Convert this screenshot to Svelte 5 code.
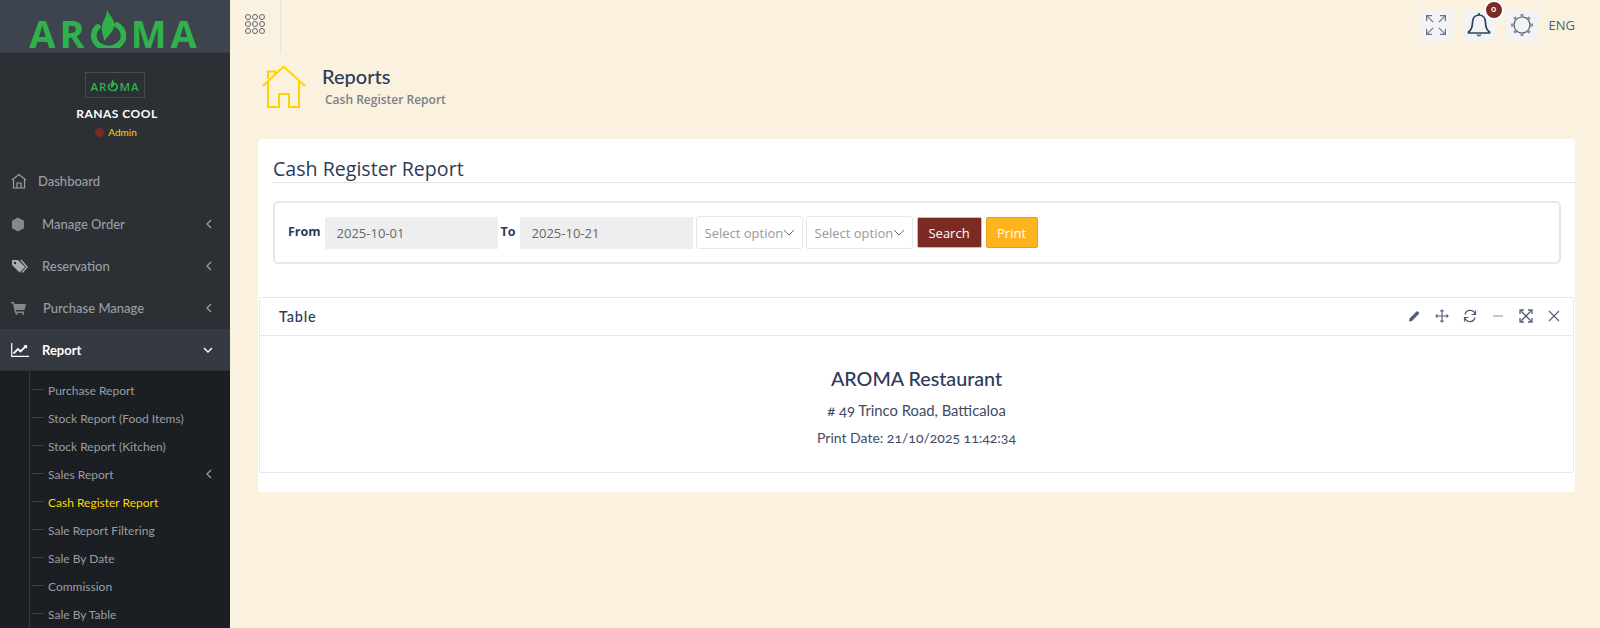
<script>
  const menu = [
    { label: "Manage Order", icon: "box" },
    { label: "Reservation", icon: "tag" },
    { label: "Purchase Manage", icon: "cart" }
  ];
  const reports = [
    { label: "Purchase Report" },
    { label: "Stock Report (Food Items)" },
    { label: "Stock Report (Kitchen)" },
    { label: "Sales Report", more: true },
    { label: "Cash Register Report", active: true },
    { label: "Sale Report Filtering" },
    { label: "Sale By Date" },
    { label: "Commission" },
    { label: "Sale By Table" }
  ];
  const dots = [0, 1, 2, 3, 4, 5, 6, 7, 8];
  const gearPins = [0, 45, 90, 135, 180, 225, 270, 315];
</script>

{#snippet chevronLeft()}
  <svg class="chev" width="8" height="10" viewBox="0 0 8 10"><path d="M6 1 2 5l4 4" fill="none" stroke="currentColor" stroke-width="1.3" /></svg>
{/snippet}

{#snippet flameO(w)}
  <svg class="flame" width={w} height={w * 1.08} viewBox="0 0 36 39">
    <path d="M8.500 17.500A14.500 12.500 0 1 0 27 15.500" fill="none" stroke="currentColor" stroke-width="5.500" stroke-linecap="round" />
    <path d="M17.500 0c.5 5 7 8 7 15 0 7-5 10-9.500 16-.5-5-3.500-8-2.500-14 1-6 5-9 5-17z" fill="currentColor" />
  </svg>
{/snippet}

<div class="shell">
  <aside class="sidebar">
    <div class="brand">
      <span class="logo">AR{@render flameO(37)}MA</span>
    </div>
    <div class="user">
      <div class="user-logo"><span class="logo small">AR{@render flameO(11)}MA</span></div>
      <div class="user-name">RANAS COOL</div>
      <div class="user-role"><i class="dot"></i>Admin</div>
    </div>
    <nav class="menu">
      <a class="item dash">
        <svg class="ico" width="16" height="16" viewBox="0 0 16 16" fill="none" stroke="#9a9ea3" stroke-width="1.2"><path d="M1 7 8 1.500 15 7" /><path d="M2.500 6.500V15h11V6.500" /><path d="M6 15v-5h4v5" /></svg>
        <span>Dashboard</span>
      </a>
      {#each menu as m}
        <a class="item">
          {#if m.icon === "box"}
            <svg class="ico" width="14" height="15" viewBox="0 0 14 15"><path d="M7 .5 13 3.800v7.400L7 14.500 1 11.200V3.800z" fill="#85888c" /></svg>
          {:else if m.icon === "tag"}
            <svg class="ico" width="17" height="15" viewBox="0 0 17 15"><path d="M1 1h6l7 7-5.500 5.500L1 6z" fill="#a9acb0" /><path d="M10 1l6 7-5 5.500" fill="none" stroke="#a9acb0" stroke-width="1.400" /><circle cx="4" cy="4" r="1.200" fill="#2c3035" /></svg>
          {:else}
            <svg class="ico" width="15" height="14" viewBox="0 0 15 14"><path d="M0 1h3l.6 2H15l-1.500 6H5l.3 1.500H13V12H4L2 2.500H0z" fill="#85888c" /><circle cx="5.500" cy="13" r="1" fill="#85888c" /><circle cx="12" cy="13" r="1" fill="#85888c" /></svg>
          {/if}
          <span class="wide">{m.label}</span>
          {@render chevronLeft()}
        </a>
      {/each}
      <a class="item open">
        <svg class="ico" width="18" height="14" viewBox="0 0 18 14" fill="none" stroke="#fff"><path d="M.7 0v13.300H18" stroke-width="1.200" /><path d="M2.500 10.500 7 6l2.500 2.500L15 3" stroke-width="1.800" /><path d="M12.500 2.200h3.600v3.600" fill="#fff" stroke="none" /></svg>
        <span class="wide">Report</span>
        <svg class="chev" width="10" height="8" viewBox="0 0 10 8"><path d="M1 2l4 4 4-4" fill="none" stroke="currentColor" stroke-width="1.400" /></svg>
      </a>
      <ul class="sub">
        {#each reports as r}
          <li class:active={r.active}>
            <span>{r.label}</span>
            {#if r.more}{@render chevronLeft()}{/if}
          </li>
        {/each}
      </ul>
    </nav>
  </aside>

  <main class="main">
    <header class="topbar">
      <div class="apps">
        <div class="apps-grid">
          {#each dots as d}<i></i>{/each}
        </div>
      </div>
      <div class="top-actions">
        <span class="tbtn">
          <svg width="20" height="20" viewBox="0 0 20 20" fill="none" stroke="#6a768c" stroke-width="1.200"><path d="M.6 6V.6H6M.6 .6l6.500 6.500" /><path d="M19.400 6V.6H14M19.400 .6l-6.500 6.500" /><path d="M.6 14v5.400H6M.6 19.400l6.500-6.500" /><path d="M19.400 14v5.400H14M19.400 19.400l-6.500-6.500" /></svg>
        </span>
        <span class="tbtn bell">
          <svg width="24" height="26" viewBox="0 0 24 26" fill="none" stroke="#2d4068" stroke-width="1.700"><path d="M12 3c-4.500 0-6.500 3.500-6.500 7.500 0 5-2 8-4 9.500v1h21v-1c-2-1.500-4-4.500-4-9.500C18.500 6.500 16.500 3 12 3z" /><path d="M12 1v2" /><path d="M9.500 22.500a2.500 2 0 0 0 5 0z" fill="#5d6b85" stroke="none" /></svg>
          <b class="badge">o</b>
        </span>
        <span class="tbtn">
          <svg width="24" height="24" viewBox="0 0 24 24" fill="none">
            <circle cx="12" cy="12" r="8" stroke="#4a5a78" stroke-width="1.200" />
            {#each gearPins as a}
              <rect x="10.500" y="1" width="3" height="3" fill="#8a93a5" transform="rotate({a} 12 12)" />
            {/each}
          </svg>
        </span>
        <span class="lang">ENG</span>
      </div>
    </header>

    <section class="title">
      <svg width="44" height="44" viewBox="0 0 44 44" fill="none" stroke="#ffd400" stroke-width="2"><path d="M1 21 21.500 1.500 43 21" /><path d="M6 17v25h11V29h10v13h10V17" /><path d="M6 14V6.500h7v2.500" /></svg>
      <div class="title-text">
        <h1>Reports</h1>
        <p>Cash Register Report</p>
      </div>
    </section>

    <section class="card">
      <h2>Cash Register Report</h2>
      <form class="filter">
        <label for="from">From</label>
        <input id="from" class="date" value="2025-10-01" readonly />
        <label for="to">To</label>
        <input id="to" class="date" value="2025-10-21" readonly />
        <div class="select"><span>Select option</span><svg width="12" height="7" viewBox="0 0 12 7"><path d="M1 1l5 5 5-5" fill="none" stroke="#5d6b85" stroke-width="1" /></svg></div>
        <div class="select"><span>Select option</span><svg width="12" height="7" viewBox="0 0 12 7"><path d="M1 1l5 5 5-5" fill="none" stroke="#5d6b85" stroke-width="1" /></svg></div>
        <button type="button" class="btn search">Search</button>
        <button type="button" class="btn print">Print</button>
      </form>

      <div class="panel">
        <div class="panel-head">
          <span class="panel-title">Table</span>
          <div class="panel-tools">
            <svg width="14" height="14" viewBox="0 0 14 14"><path d="M2 12.500l.6-3L9.500 2.600a1 1 0 0 1 1.400 0l.9.9a1 1 0 0 1 0 1.400L4.900 11.900z" fill="#4f5d78" /></svg>
            <svg width="14" height="14" viewBox="0 0 14 14" fill="none" stroke="#4f5d78" stroke-width="1.100"><path d="M7 1v12M1 7h12" /><path d="M5.500 2.500 7 1l1.500 1.500M5.500 11.500 7 13l1.500-1.500M2.500 5.500 1 7l1.500 1.500M11.500 5.500 13 7l-1.500 1.500" /></svg>
            <svg width="14" height="14" viewBox="0 0 14 14" fill="none" stroke="#4f5d78" stroke-width="1.200"><path d="M2 5.500A5.200 5.200 0 0 1 12 5M12 8.500A5.200 5.200 0 0 1 2 9" /><path d="M12.500 1.500V5.500H8.500M1.500 12.500V8.500H5.500" /></svg>
            <svg width="14" height="14" viewBox="0 0 14 14" fill="none" stroke="#9aa3b2" stroke-width="1.200"><path d="M2 7h10" /></svg>
            <svg width="14" height="14" viewBox="0 0 14 14" fill="none" stroke="#4f5d78" stroke-width="1.300"><path d="M2 2l10 10M12 2 2 12" /><path d="M1 5V1h4M13 5V1H9M1 9v4h4M13 9v4H9" /></svg>
            <svg width="14" height="14" viewBox="0 0 14 14" fill="none" stroke="#4f5d78" stroke-width="1.100"><path d="M2 2l10 10M12 2 2 12" /></svg>
          </div>
        </div>
        <div class="panel-body">
          <h3>AROMA Restaurant</h3>
          <p class="addr"># 49 Trinco Road, Batticaloa</p>
          <p class="date-line">Print Date: 21/10/2025 11:42:34</p>
        </div>
      </div>
    </section>
  </main>
</div>

<style>
  :global(body) {
    margin: 0;
    background: #faf2df;
  }

  .shell {
    display: flex;
    height: 628px;
    overflow: hidden;
    font-family: Lato, "Open Sans", sans-serif;
    color: #2d3a5a;
  }

  /* sidebar */
  .sidebar {
    width: 230px;
    flex: none;
    background: #2c3035;
    overflow: hidden;
  }

  .brand {
    height: 53px;
    background: #3e444d;
    display: flex;
    align-items: center;
    justify-content: center;
    box-sizing: border-box;
    border-bottom: 1px solid #383d44;
  }

  .logo {
    display: inline-flex;
    align-items: flex-end;
    color: #2fb14c;
    font-family: "Open Sans", sans-serif;
    font-weight: 700;
    font-size: 38px;
    line-height: 28px;
    letter-spacing: 4px;
    margin-top: 4px;
  }

  .flame {
    margin: 0 5px -1px 0;
  }

  .logo.small {
    font-size: 11.500px;
    font-weight: 600;
    line-height: 9px;
    letter-spacing: 1px;
    margin-top: 0;
  }

  .logo.small .flame {
    margin: 0 1px 0 0;
  }

  .user {
    display: flex;
    flex-direction: column;
    align-items: center;
    padding-top: 19px;
    height: 106px;
    box-sizing: border-box;
  }

  .user-logo {
    width: 60px;
    height: 26px;
    box-sizing: border-box;
    border: 1px solid #474c52;
    display: flex;
    align-items: center;
    justify-content: center;
  }

  .user-name {
    margin: 7px 0 0 4px;
    color: #fff;
    font-size: 12px;
    font-weight: 700;
    letter-spacing: 0.500px;
    line-height: 18px;
  }

  .user-role {
    margin-top: 2px;
    display: flex;
    align-items: center;
    gap: 4px;
    color: #ffd400;
    font-size: 10px;
    line-height: 14px;
    margin-left: 2px;
  }

  .dot {
    width: 9px;
    height: 9px;
    border-radius: 50%;
    background: #7b2a24;
  }

  .menu {
    color: #9a9ea3;
    font-size: 13px;
  }

  .item {
    display: flex;
    align-items: center;
    height: 42px;
    padding: 0 17px 0 11px;
    font-weight: 500;
  }

  .item.dash {
    height: 44px;
    gap: 11px;
  }

  .item .ico {
    flex: none;
  }

  .wide {
    flex: 1;
    padding-left: 14px;
  }

  .item:nth-child(2) .wide,
  .item:nth-child(4) .wide {
    padding-left: 17px;
  }

  .item:nth-child(3) .wide {
    padding-left: 14px;
  }

  .item.open {
    background: #353941;
    color: #fff;
    font-weight: 700;
    box-sizing: border-box;
    border-bottom: 1px solid #2a2d32;
  }

  .item.open .wide {
    padding-left: 13px;
  }

  .chev {
    flex: none;
  }

  .sub {
    list-style: none;
    margin: 0;
    padding: 5px 0 0;
    background: #1b1e22;
    height: 256px;
    position: relative;
    font-size: 12px;
  }

  .sub::before {
    content: "";
    position: absolute;
    left: 29px;
    top: 0;
    bottom: 0;
    width: 1px;
    background: #33373d;
  }

  .sub li {
    display: flex;
    align-items: center;
    justify-content: space-between;
    height: 28px;
    padding: 0 17px 0 48px;
    position: relative;
    color: #9a9ea3;
  }

  .sub li::before {
    content: "";
    position: absolute;
    left: 31px;
    top: 13px;
    width: 13px;
    height: 1px;
    background: #3c4046;
  }

  .sub li.active {
    color: #ffd400;
  }

  /* main */
  .main {
    flex: 1;
    min-width: 0;
  }

  .topbar {
    height: 53px;
    display: flex;
    justify-content: space-between;
    align-items: center;
  }

  .apps {
    height: 53px;
    width: 51px;
    box-sizing: border-box;
    border-right: 1px solid #e6e6e0;
    display: flex;
    align-items: center;
    justify-content: center;
  }

  .apps-grid {
    display: grid;
    grid-template-columns: repeat(3, 6px);
    gap: 1px;
    margin-top: -5px;
  }

  .apps-grid i {
    width: 6px;
    height: 6px;
    box-sizing: border-box;
    border: 1px solid #5f6470;
    border-radius: 50%;
  }

  .top-actions {
    display: flex;
    align-items: center;
    gap: 10px;
    padding-right: 25px;
    margin-top: -3px;
  }

  .tbtn {
    width: 33px;
    height: 33px;
    background: #f3f3f4;
    display: flex;
    align-items: center;
    justify-content: center;
    position: relative;
  }

  .badge {
    position: absolute;
    top: -9px;
    right: -8px;
    width: 16px;
    height: 16px;
    border: 2px solid #fff;
    border-radius: 50%;
    background: #7b2a24;
    color: #fff;
    font-size: 9px;
    line-height: 13px;
    text-align: center;
  }

  .lang {
    font-family: "Open Sans", sans-serif;
    font-size: 13px;
    color: #4f5d78;
  }

  .title {
    display: flex;
    gap: 16px;
    padding: 12px 0 0 32px;
    height: 74px;
    box-sizing: content-box;
  }

  .title-text h1 {
    margin: -1px 0 0;
    font-size: 20px;
    font-weight: 500;
    line-height: 24px;
  }

  .title-text p {
    margin: 3px 0 0 3px;
    font-family: "Open Sans", sans-serif;
    font-size: 12px;
    font-weight: 600;
    color: #7b8087;
  }

  .card {
    margin: 0 25px 0 28px;
    background: #fff;
    border-radius: 4px;
    height: 353px;
    box-sizing: border-box;
    padding: 16px 0 0 15px;
    font-family: "Open Sans", sans-serif;
  }

  .card h2 {
    margin: 0;
    font-size: 19.600px;
    font-weight: 400;
    line-height: 27px;
    padding-bottom: 0;
    border-bottom: 1px solid #e3e3e3;
  }

  .filter {
    margin: 18px 14px 0 0;
    height: 63px;
    box-sizing: border-box;
    border: 2px solid #e8e8e8;
    border-radius: 5px;
    display: flex;
    align-items: center;
    padding: 0 0 0 13px;
    gap: 3px;
  }

  .filter label {
    font-size: 12.500px;
    font-weight: 700;
    margin-top: -3px;
    padding-right: 1px;
  }

  .date {
    width: 173px;
    height: 32px;
    box-sizing: border-box;
    border: 1px solid #eeeeee;
    background: #eeeeee;
    padding: 0 11px;
    font: 13px "Open Sans", sans-serif;
    color: #666;
    outline: none;
  }

  .select {
    width: 107px;
    height: 33px;
    box-sizing: border-box;
    border: 1px solid #e8e8e8;
    border-radius: 3px;
    display: flex;
    align-items: center;
    padding-left: 8px;
    font-size: 13px;
    color: #999;
    white-space: nowrap;
    overflow: hidden;
  }

  .select svg {
    flex: none;
  }

  .btn {
    height: 31px;
    box-sizing: border-box;
    border-radius: 2px;
    color: #fff;
    font: 13px "Open Sans", sans-serif;
    padding: 0;
  }

  .search {
    width: 65px;
    margin-left: 1px;
    background: #7b2a24;
    border: 1px solid #ffc107;
  }

  .print {
    width: 52px;
    margin-left: 1px;
    background: #ffb41e;
    border: 1px solid #e8a20f;
  }

  .panel {
    margin: 33px 1px 0 -14px;
    height: 176px;
    box-sizing: border-box;
    border: 1px solid #e6e9ef;
    border-radius: 2px;
  }

  .panel-head {
    height: 38px;
    box-sizing: border-box;
    border-bottom: 1px solid #e6e9ef;
    display: flex;
    align-items: center;
    justify-content: space-between;
    padding: 0 12px 1px 19px;
  }

  .panel-title {
    font-family: Lato, sans-serif;
    font-size: 14.500px;
    font-weight: 500;
    letter-spacing: 0.800px;
  }

  .panel-tools {
    display: flex;
    gap: 14px;
  }

  .panel-body {
    text-align: center;
    font-family: Lato, sans-serif;
    padding-top: 29px;
  }

  .panel-body h3 {
    margin: 0;
    font-size: 19.700px;
    font-weight: 500;
    line-height: 27px;
  }

  .panel-body p {
    font-size: 14px;
    line-height: 22px;
    color: #3f4a66;
    font-variant-numeric: oldstyle-nums;
  }

  .panel-body .addr {
    margin: 7px 0 0;
    font-size: 14.800px;
  }

  .panel-body .date-line {
    margin: 6px 0 0;
  }
</style>
